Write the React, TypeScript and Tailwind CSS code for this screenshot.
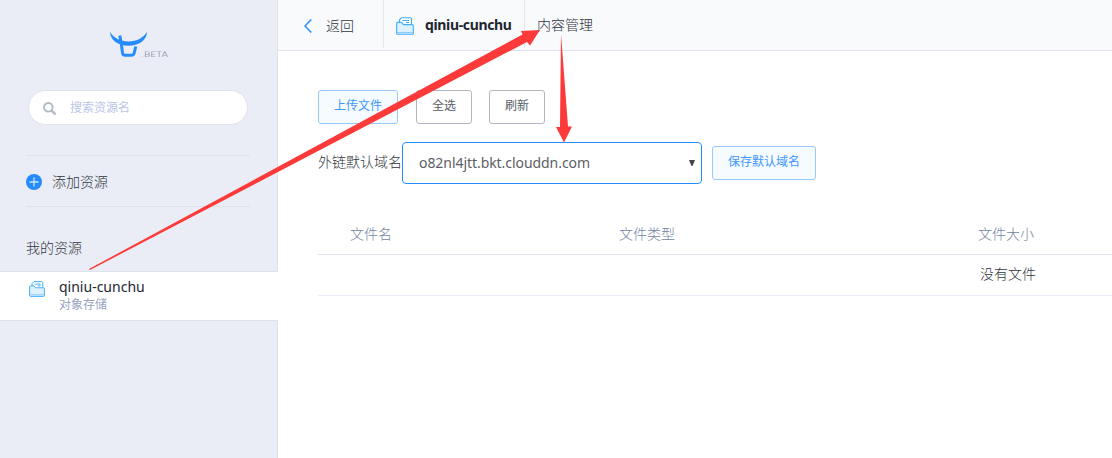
import React from "react";

const FolderIcon = ({ className }: { className: string }) => (
  <svg viewBox="0 0 18 18" className={className} fill="none" stroke="#41adfb" strokeWidth="1.1">
    <path d="M3.500 5.500V2.800L5.500 .7h9l1 1V7.500" fill="#fff" />
    <path d="M6.500 3.500h6.500M10 5.500h3" />
    <path d="M.7 6.300c0-.6.3-.9.9-.9h3.900l2 2.200h8.700c.7 0 1.100.3 1.100 1v7.800c0 .6-.4.9-1 .9H1.700c-.6 0-1-.3-1-.9z" fill="#def1ff" />
    <path d="M1.300 15.500h15.400" stroke="#8bcbfc" />
  </svg>
);

const BullLogo = () => (
  <svg viewBox="0 0 40 28" className="h-7 w-10 shrink-0">
    <path d="M.8 .8C5 7 11 10.500 19.500 10.500S34 7 38.200 .8C37.500 9.500 30 14.800 19.500 14.800S1.500 9.500 .8 .8z" fill="#258cff" />
    <path d="M10.800 4.500L12.500 14l1 8c.3 1.800.9 2.300 2.500 2.300h6.500c1.600 0 2.300-.6 2.700-2.300l1.600-6.500" fill="none" stroke="#258cff" strokeWidth="3" />
  </svg>
);

const Sidebar = () => (
  <aside className="flex w-[278px] shrink-0 flex-col border-r border-[#dfe2eb] bg-[#eaedf5]">
    <div className="flex h-[90px] pt-[31px] pl-[109px]">
      <BullLogo />
      <svg viewBox="0 0 28 8" className="-ml-2 mt-[19px] h-2 w-7">
        <text x="0" y="6.500" fontSize="7.500" textLength="27" lengthAdjust="spacingAndGlyphs" fill="#56617d" fontFamily="DejaVu Sans, sans-serif">.BETA</text>
      </svg>
    </div>
    <div className="ml-7 flex h-[35px] w-[220px] items-center rounded-full border border-[#dfe2eb] bg-white pl-3.5 text-xs font-normal text-[#bac5e6]">
      <svg viewBox="0 0 14 14" className="mt-0.5 h-3.5 w-3.5" fill="none" stroke="#b1b8c6">
        <circle cx="5.300" cy="5.300" r="4.300" strokeWidth="1.900" />
        <path d="M8.500 8.500l4 4" strokeWidth="2.400" />
      </svg>
      <span className="ml-[13px]">搜索资源名</span>
    </div>
    <div className="mt-[30px] ml-[26px] flex h-[52px] w-[224px] items-center border-y border-[#dee1ea]">
      <svg viewBox="0 0 16 16" className="mt-0.5 h-4 w-4">
        <circle cx="8" cy="8" r="8" fill="#258cff" />
        <path d="M8 3.500v9M3.500 8h9" stroke="#cfe5ff" strokeWidth="1.300" />
      </svg>
      <span className="ml-2.5 pt-0.5">添加资源</span>
    </div>
    <div className="h-16 pt-[31px] pl-[26px] leading-5">我的资源</div>
    <div className="-mr-px flex h-[50px] border-y border-[#dfe2eb] bg-white pl-[29px]">
      <FolderIcon className="mt-[9px] h-4 w-4" />
      <div className="ml-3.5 pt-1.5">
        <div className="leading-[18px] font-normal text-[#202630]">qiniu-cunchu</div>
        <div className="text-xs leading-[18px] font-normal text-[#98a3c0]">对象存储</div>
      </div>
    </div>
  </aside>
);

const Header = () => (
  <header className="flex h-[51px] items-start border-b border-[#e0e3ee] bg-[#f9fafc]">
    <div className="flex h-12 w-[106px] items-center border-r border-[#e4e7f0] pt-1 pl-[26px]">
      <svg viewBox="0 0 8 14" className="h-3.5 w-2" fill="none" stroke="#258cff" strokeWidth="1.500">
        <path d="M7.300 .5L1 7l6.300 6.500" />
      </svg>
      <span className="ml-3.5">返回</span>
    </div>
    <div className="flex h-12 w-[141px] items-center border-r border-[#e4e7f0] pt-1 pl-3">
      <FolderIcon className="h-[18px] w-[18px]" />
      <span className="ml-[11px] whitespace-nowrap pb-0.5 font-bold tracking-[-0.35px] text-[#202630]">qiniu-cunchu</span>
    </div>
    <div className="flex h-12 items-center pt-0.5 pl-3">内容管理</div>
  </header>
);

const Button = ({ label, primary, className }: { label: string; primary?: boolean; className: string }) => (
  <button
    className={`flex h-[34px] items-center justify-center rounded-[3px] border pb-0.5 text-xs font-normal ${
      primary ? "border-[#99c9fb] bg-[#f6fbff] text-[#3d97ff]" : "border-[#b3b7c1] bg-white text-[#565c66]"
    } ${className}`}
  >
    {label}
  </button>
);

const Arrows = () => (
  <svg viewBox="0 0 1112 458" className="pointer-events-none absolute inset-0 h-[458px] w-[1112px]" fill="#fc3a39">
    <path d="M89 269L522.500 34.500L521 31L540 30L530 45.500L527 42L90 270z" />
    <path d="M561 34L568 126.500H572L564 142.500L556 127H560z" />
  </svg>
);

export default function App() {
  return (
    <div className="relative flex h-[458px] w-[1112px] overflow-hidden bg-white font-['Noto_Sans','Noto_Sans_CJK_SC',sans-serif] text-sm font-light text-[#30353e]">
      <Sidebar />
      <main className="flex min-w-0 flex-1 flex-col">
        <Header />
        <div className="flex pt-[39px] pl-10">
          <Button label="上传文件" primary className="w-20" />
          <Button label="全选" className="ml-[18px] w-14" />
          <Button label="刷新" className="ml-[17px] w-14" />
        </div>
        <div className="mt-[18px] flex h-[42px] items-center pl-10">
          <span className="w-[84px] whitespace-nowrap pb-[3px]">外链默认域名</span>
          <div className="flex h-[42px] w-[300px] items-center justify-between rounded border border-[#258cff] pr-1.5 pl-4">
            <span className="font-normal tracking-[-0.06px] text-[#5c6067]">o82nl4jtt.bkt.clouddn.com</span>
            <svg viewBox="0 0 6 6" className="h-1.5 w-1.5" fill="#444"><path d="M0 0h6L3.500 6h-1z" /></svg>
          </div>
          <Button label="保存默认域名" primary className="ml-2.5 w-[104px]" />
        </div>
        <div className="mt-[29px] ml-10">
          <div className="flex h-[42px] items-center border-b border-[#e0e3f2] pl-8 text-[#7484a5]">
            <span className="w-[269px]">文件名</span>
            <span className="w-[359px]">文件类型</span>
            <span>文件大小</span>
          </div>
          <div className="flex h-[41px] items-center border-b border-[#ebedf8] pb-0.5 pl-[662px]">没有文件</div>
        </div>
      </main>
      <Arrows />
    </div>
  );
}
